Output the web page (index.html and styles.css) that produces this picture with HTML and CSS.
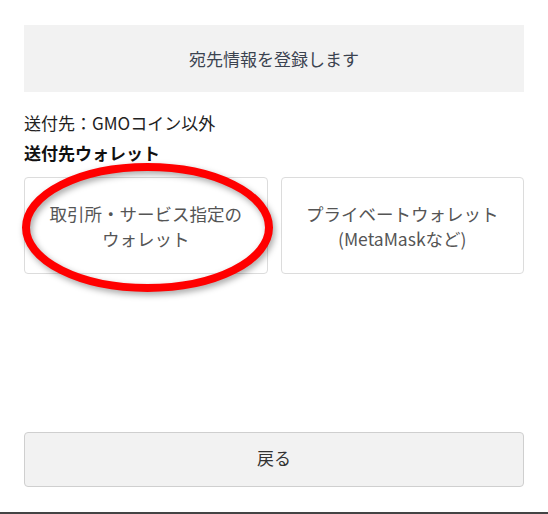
FILE: index.html
```html
<!DOCTYPE html>
<html lang="ja">
<head>
<meta charset="utf-8">
<title>宛先情報を登録します</title>
<link rel="stylesheet" href="styles.css">
</head>
<body>
<div class="modal">
  <div class="title-box">宛先情報を登録します</div>
  <p class="dest">送付先：GMOコイン以外</p>
  <p class="label">送付先ウォレット</p>
  <div class="cards">
    <button class="card">取引所・サービス指定の<br>ウォレット</button>
    <button class="card">プライベートウォレット<br>(MetaMaskなど)</button>
  </div>
  <button class="back">戻る</button>
  <svg class="annotation" width="548" height="514" viewBox="0 0 548 514" aria-hidden="true">
    <ellipse cx="147.5" cy="227.5" rx="121.5" ry="60.5" fill="none" stroke="#ff0000" stroke-width="8"/>
  </svg>
</div>
<div class="footer"></div>
</body>
</html>
```
FILE: styles.css
```css
html, body {
  margin: 0;
  padding: 0;
  background: #ffffff;
}
body {
  font-family: "Noto Sans CJK JP", "Noto Sans", "Liberation Sans", sans-serif;
  color: #222;
}
.modal {
  position: relative;
  box-sizing: border-box;
  height: 512px;
  padding: 25px 24px 0;
  display: flex;
  flex-direction: column;
}
.title-box {
  height: 67px;
  background: #f2f2f2;
  display: flex;
  align-items: center;
  justify-content: center;
  font-size: 17px;
  color: #3b4350;
}
.dest {
  margin: 19px 0 0;
  font-size: 17px;
  line-height: 24px;
  color: #222;
}
.label {
  margin: 6px 0 0;
  font-size: 17px;
  line-height: 24px;
  font-weight: 700;
  color: #111;
}
.cards {
  margin-top: 12px;
  display: grid;
  grid-template-columns: 1fr 1fr;
  gap: 13px;
}
.card {
  height: 97px;
  box-sizing: border-box;
  border: 1px solid #dcdcdc;
  border-radius: 4px;
  background: #fff;
  font-family: inherit;
  font-size: 17.5px;
  line-height: 25px;
  color: #555;
  padding: 0;
}
.back {
  margin-top: auto;
  margin-bottom: 25px;
  height: 55px;
  box-sizing: border-box;
  border: 1px solid #cfcfcf;
  border-radius: 4px;
  background: #f2f2f2;
  font-family: inherit;
  font-size: 17px;
  line-height: 24px;
  color: #333;
  padding: 0 0 3px;
}
.annotation {
  position: absolute;
  left: 0;
  top: 0;
  pointer-events: none;
  filter: drop-shadow(2px 3px 3px rgba(0, 0, 0, 0.35));
}
.footer {
  height: 2px;
  background: #444;
}
```
